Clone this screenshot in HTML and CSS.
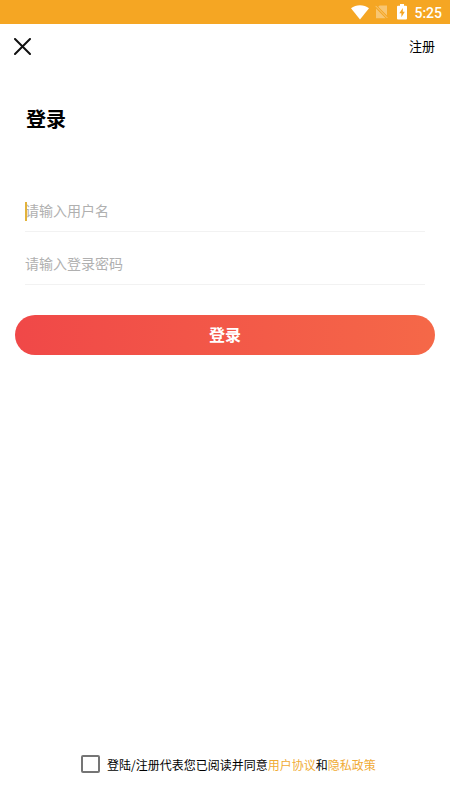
FILE: index.html
```html
<!DOCTYPE html>
<html lang="zh-CN">
<head>
<meta charset="utf-8">
<title>登录</title>
<link rel="stylesheet" href="styles.css">
</head>
<body>
<div class="screen">
  <div class="status">
    <svg class="wifi" width="18" height="15" viewBox="0 0 18 15"><path d="M0 3.2C5 -.9 13 -.9 18 3.2L9 14.5Z" fill="#fff"/></svg>
    <svg class="sim" width="13" height="14" viewBox="0 0 13 14"><path d="M4.6 .5H12V10.6L3.2 1.8ZM1 3.6L10.6 13.2H1Z" fill="#fff" opacity=".36"/><path d="M.6 .9L12.3 12.9" stroke="#fff" stroke-width="1" opacity=".4"/></svg>
    <svg class="battery" width="10" height="16" viewBox="0 0 10 16"><path d="M3 0H7V1.7H9Q10 1.7 10 2.7V14.5Q10 15.5 9 15.5H1Q0 15.5 0 14.5V2.7Q0 1.7 1 1.7H3Z" fill="#fff"/><path d="M5.8 4L2.3 9.2H4.4V13.2L7.8 7.8H5.8Z" fill="#f5a623"/></svg>
    <span class="time">5:25</span>
  </div>
  <header class="nav">
    <svg width="17" height="17" viewBox="0 0 17 17"><path d="M1 1L16 16M16 1L1 16" stroke="#111" stroke-width="2" stroke-linecap="round"/></svg>
    <a class="register">注册</a>
  </header>
  <h1 class="title">登录</h1>
  <form class="form">
    <div class="field"><i class="caret"></i>请输入用户名</div>
    <div class="field">请输入登录密码</div>
  </form>
  <div class="submit">登录</div>
  <footer class="agreement">
    <span class="check"></span>
    <p>登陆/注册代表您已阅读并同意<a>用户协议</a>和<a>隐私政策</a></p>
  </footer>
</div>
</body>
</html>
```
FILE: styles.css
```css
* { box-sizing: border-box; }
body {
  margin: 0;
  background: #fff;
  color: #000;
  font-family: "Noto Sans CJK SC", sans-serif;
}
.screen {
  height: 800px;
  display: flex;
  flex-direction: column;
  overflow: hidden;
}
.status {
  height: 24px;
  flex: none;
  display: flex;
  align-items: center;
  justify-content: flex-end;
  padding-right: 8px;
  background: #f5a623;
  color: #fff;
}
.sim { margin: 0 9px 0 6px; }
.time {
  margin-left: 7px;
  font: 500 14px/24px Roboto, sans-serif;
  padding-top: 2px;
}
.nav {
  height: 44px;
  flex: none;
  display: flex;
  align-items: center;
  justify-content: space-between;
  padding: 0 15px 0 14px;
}
.register {
  font-size: 13px;
  line-height: 20px;
}
.title {
  margin: 36px 0 0 26px;
  font-size: 20px;
  line-height: 30px;
  font-weight: 700;
}
.form { margin: 45px 25px 0; }
.field {
  position: relative;
  height: 53px;
  padding-top: 12px;
  border-bottom: 1px solid #f2f2f2;
  color: #b0b0b0;
  font-size: 14px;
  line-height: 38px;
}
.caret {
  position: absolute;
  left: 0;
  top: 23px;
  width: 2px;
  height: 19px;
  background: #e2b33c;
}
.submit {
  height: 40px;
  margin: 30px 15px 0;
  border-radius: 20px;
  background: linear-gradient(90deg, #f04848, #f56848);
  color: #fff;
  font-size: 16px;
  line-height: 38px;
  font-weight: 700;
  text-align: center;
}
.agreement {
  margin-top: auto;
  height: 72px;
  display: flex;
  align-items: center;
  padding-left: 81px;
  gap: 7px;
  font-size: 12px;
  line-height: 18px;
}
.check {
  width: 19px;
  height: 18px;
  border: 2px solid #757575;
  border-radius: 2px;
}
.agreement p { margin: 0; padding-top: 2px; white-space: nowrap; }
.agreement a { color: #f0ab35; }
```
